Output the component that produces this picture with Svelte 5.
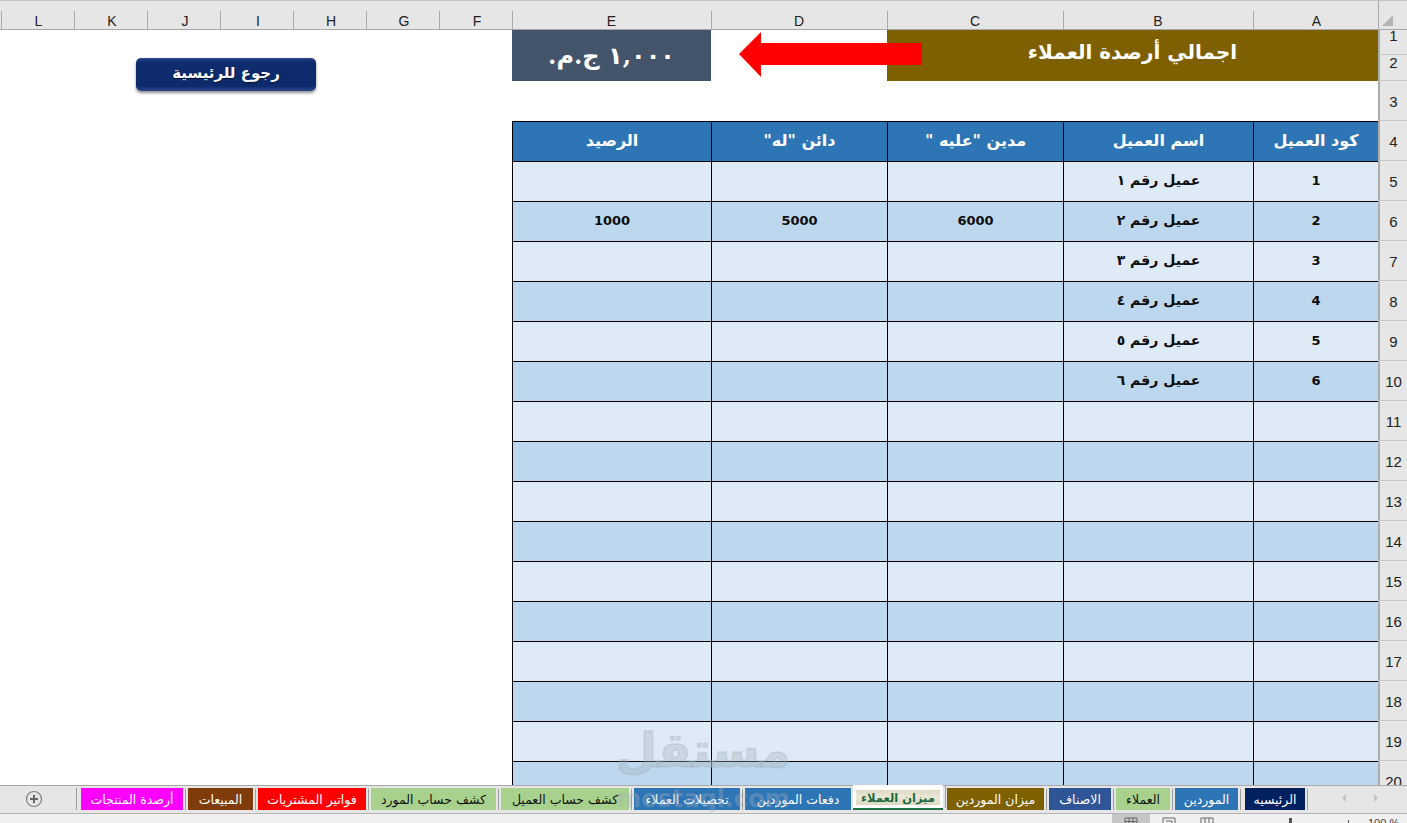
<script>
  const leftCols = ['L','K','J','I','H','G','F'];
  const names = ['عميل رقم ١','عميل رقم ٢','عميل رقم ٣','عميل رقم ٤','عميل رقم ٥','عميل رقم ٦'];
  const heads = ['الرصيد','دائن "له"','مدين "عليه "','اسم العميل','كود العميل'];
  const rows = Array.from({ length: 16 }, (_, i) => {
    const n = names[i];
    const bal = i === 1 ? ['1000','5000','6000'] : ['','',''];
    return { num: i + 5, cells: [...bal, n || '', n ? String(i + 1) : ''] };
  });
  const tabs = [
    { t: 'أرصدة المنتجات', w: 102, c: 'magenta' },
    { t: 'المبيعات', w: 65, c: 'brown' },
    { t: 'فواتير المشتريات', w: 108, c: 'red' },
    { t: 'كشف حساب المورد', w: 125, c: 'green' },
    { t: 'كشف حساب العميل', w: 128, c: 'green' },
    { t: 'تحصيلات العملاء', w: 106, c: 'blue' },
    { t: 'دفعات الموردين', w: 106, c: 'blue' },
    { t: 'ميزان العملاء', w: 90, c: 'active' },
    { t: 'ميزان الموردين', w: 97, c: 'gold' },
    { t: 'الاصناف', w: 62, c: 'indigo' },
    { t: 'العملاء', w: 54, c: 'green' },
    { t: 'الموردين', w: 63, c: 'blue' },
    { t: 'الرئيسيه', w: 60, c: 'navy' }
  ];
</script>

<div class="app">
  <header class="colbar">
    {#each leftCols as c}<div class="col narrow">{c}</div>{/each}
    <div class="col e">E</div>
    <div class="col d">D</div>
    <div class="col cc">C</div>
    <div class="col b">B</div>
    <div class="col a">A</div>
    <div class="corner"><span class="tri"></span></div>
  </header>

  <main class="sheet">
    <div class="free">
      <button class="back">رجوع للرئيسية</button>
    </div>

    <div class="sum">١,٠٠٠ ج.م.</div>
    <div class="title">اجمالي أرصدة العملاء</div>
    <div class="rh r1">1</div>
    <div class="rh r2">2</div>
    <div class="blank"></div>
    <div class="rh tall">3</div>

    {#each heads as h}<div class="cell head">{h}</div>{/each}
    <div class="rh tall">4</div>

    {#each rows as r, i}
      {#each r.cells as v, j}
        <div class="cell" class:alt={i % 2 === 1} class:name={j === 3}>{v}</div>
      {/each}
      <div class="rh tall">{r.num}</div>
    {/each}

    <svg class="arrow" viewBox="0 0 184 45" width="184" height="45" aria-hidden="true">
      <polygon points="0,22 22,0 22,11 183,11 183,33 22,33 22,45" fill="#ff0000" />
    </svg>
  </main>

  <footer class="tabbar">
    <div class="addzone">
      <svg width="18" height="18" viewBox="0 0 18 18" aria-hidden="true">
        <circle cx="9" cy="9" r="7.5" fill="none" stroke="#7f7f7f" stroke-width="1.2" />
        <path d="M9 5v8M5 9h8" stroke="#666" stroke-width="2" />
      </svg>
    </div>
    <div class="tabs">
      {#each tabs as tab}
        <div class="tab {tab.c}" style:width="{tab.w}px"><span>{tab.t}</span></div>
      {/each}
    </div>
    <div class="scrollarrows">
      <span class="al"></span>
      <span class="ar"></span>
    </div>
  </footer>

  <div class="status">
    <div class="view on">
      <svg width="14" height="6" viewBox="0 0 14 6"><path d="M1 6V1h12v5M5 1v5M9 1v5M1 4.5h12" fill="none" stroke="#666"/></svg>
    </div>
    <div class="view">
      <svg width="14" height="6" viewBox="0 0 14 6"><path d="M1 6V1h12v5M4 4h6v2" fill="none" stroke="#666"/></svg>
    </div>
    <div class="view">
      <svg width="14" height="6" viewBox="0 0 14 6"><path d="M1 6V1h12v5M5 1v5M9 1v5" fill="none" stroke="#666"/></svg>
    </div>
    <div class="slider"><i class="thumb"></i><i class="plus"></i></div>
    <div class="zoomtxt">100 %</div>
  </div>

  <div class="mark" aria-hidden="true">
    <div class="mark-ar">مستقل</div>
    <div class="mark-en">mostaql.com</div>
  </div>
</div>

<style>
  :global(body) { margin: 0; background: #fff; }
  .app {
    position: relative;
    width: 1407px;
    height: 823px;
    overflow: hidden;
    display: flex;
    flex-direction: column;
    font-family: "Liberation Sans", Arial, sans-serif;
  }
  .colbar {
    display: flex;
    height: 30px;
    box-sizing: border-box;
    background: #e6e6e6;
    border-top: 1px solid #c4c4c4;
    border-bottom: 1px solid #a8a8a8;
    flex: none;
  }
  .col {
    box-sizing: border-box;
    font-size: 14px;
    line-height: 15px;
    padding-top: 13px;
    height: 28px;
    text-align: center;
    color: #222;
    position: relative;
  }
  .col::before {
    content: "";
    position: absolute;
    left: 0;
    top: 10px;
    bottom: 0;
    width: 1px;
    background: #ababab;
  }
  .narrow { width: 73px; padding-left: 3px; }
  .narrow:first-child { width: 74px; }
  .narrow:first-child::before { left: 1px; }
  .e { width: 199px; }
  .d { width: 176px; }
  .cc { width: 176px; }
  .b { width: 190px; }
  .a { width: 125px; padding-left: 2px; }
  .corner { width: 29px; position: relative; border-left: 1px solid #ababab; box-sizing: border-box; }
  .tri {
    position: absolute;
    left: 3px;
    top: 14px;
    width: 0;
    height: 0;
    border-style: solid;
    border-width: 0 0 11px 11px;
    border-color: transparent transparent #b4b4b4 transparent;
  }

  .sheet {
    position: relative;
    flex: none;
    height: 755px;
    overflow: hidden;
    display: grid;
    grid-template-columns: 512px 199px 176px 176px 190px 125px 29px;
    grid-template-rows: 25px 26px 40px repeat(17, 40px);
    direction: ltr;
    font-family: "DejaVu Sans", sans-serif;
  }
  .free {
    grid-column: 1;
    grid-row: 1 / -1;
    padding: 28px 0 0 136px;
    background: #fff;
  }
  .back {
    display: block;
    width: 180px;
    height: 33px;
    padding: 0 0 3px;
    border: 0;
    border-radius: 5px;
    background: linear-gradient(#2c4a8c 0, #0e2c6e 10%, #0c2a6c 85%, #2a4688 100%);
    box-shadow: 0 2px 3px rgba(0, 0, 0, .45);
    color: #fff;
    font: bold 15px "DejaVu Sans", sans-serif;
    text-shadow: 0 1px 1px rgba(0, 0, 0, .6);
  }
  .sum {
    grid-column: 2;
    grid-row: 1 / 3;
    background: #44546a;
    color: #fff;
    font: bold 24px "DejaVu Serif", "DejaVu Sans", serif;
    display: flex;
    align-items: center;
    justify-content: center;
    direction: rtl;
    letter-spacing: 1px;
  }
  .title {
    grid-column: 4 / 7;
    grid-row: 1 / 3;
    background: #7f6000;
    color: #fff;
    font-weight: bold;
    font-size: 20px;
    display: flex;
    align-items: center;
    justify-content: center;
    direction: rtl;
    padding-bottom: 7px;
  }
  .blank { grid-column: 2 / 7; grid-row: 3; background: #fff; }
  .rh {
    grid-column: 7;
    box-sizing: border-box;
    background: #e6e6e6;
    border-left: 2px solid #ababab;
    border-bottom: 1px solid #c8c8c8;
    font: 15px "Liberation Sans", Arial, sans-serif;
    color: #222;
    display: flex;
    align-items: center;
    justify-content: center;
  }
  .r1 { grid-row: 1; align-items: flex-start; line-height: 11px; }
  .r2 { grid-row: 2; align-items: flex-start; line-height: 15px; }
  .rh.tall { padding-top: 1px; }
  .cell {
    box-sizing: border-box;
    background: #deeaf6;
    border-left: 1px solid #000;
    border-top: 1px solid #000;
    font-weight: bold;
    font-size: 13px;
    color: #0d0d0d;
    display: flex;
    align-items: center;
    justify-content: center;
    padding-bottom: 3px;
    direction: rtl;
  }
  .cell.name { font-size: 14px; }
  .cell.alt { background: #bdd7ee; }
  .cell.head { background: #2e75b6; color: #fff; font-size: 16px; padding-bottom: 3px; }
  .arrow {
    position: absolute;
    left: 739px;
    top: 2px;
  }

  .tabbar {
    position: relative;
    flex: none;
    height: 29px;
    box-sizing: border-box;
    background: #e6e6e6;
    border-top: 1px solid #a8a8a8;
    border-bottom: 1px solid #b5b5b5;
    display: flex;
    align-items: flex-start;
    z-index: 2;
  }
  .addzone {
    width: 77px;
    height: 22px;
    margin-top: 2px;
    display: flex;
    align-items: center;
    padding-left: 25px;
    box-sizing: border-box;
    border-right: 1px solid #9c9c9c;
  }
  .tabs {
    flex: 1;
    display: flex;
    justify-content: flex-end;
    gap: 5px;
    padding-top: 2px;
  }
  .tab {
    position: relative;
    flex: none;
    height: 22px;
    box-sizing: border-box;
    display: flex;
    align-items: center;
    justify-content: center;
    font: 12.5px "DejaVu Sans", sans-serif;
    white-space: nowrap;
    color: #fff;
    direction: rtl;
  }
  .tab::after {
    content: "";
    position: absolute;
    right: -3px;
    top: 1px;
    bottom: 0;
    width: 1px;
    background: #9c9c9c;
  }
  .tab:last-child { margin-left: 2px; }
  .magenta { background: #ff00ff; }
  .brown { background: #7f3b09; }
  .red { background: #ff0000; }
  .green { background: #a9d18e; color: #111; }
  .blue { background: #2e75b6; }
  .gold { background: #7f6000; }
  .indigo { background: #2f5597; }
  .navy { background: #002060; }
  .tab.active {
    margin-top: -3px;
    height: 25px;
    margin-left: -3px;
    margin-right: -1px;
    background: #fff;
    padding: 5px 3px 3px;
    color: #1c6b3c;
    font-weight: bold;
    font-size: 11.5px;
    border-bottom: 2px solid #217346;
  }
  .tab.active span {
    display: flex;
    align-items: center;
    justify-content: center;
    width: 100%;
    height: 100%;
    background: linear-gradient(#dcd8c0, #ece8d8 45%, #dcd8c0);
  }
  .scrollarrows {
    width: 102px;
    flex: none;
    position: relative;
    height: 24px;
  }
  .al, .ar {
    position: absolute;
    top: 8px;
    width: 0;
    height: 0;
    border-style: solid;
    border-width: 4px;
  }
  .al { left: 37px; border-color: transparent #c4c4c4 transparent transparent; border-left-width: 0; }
  .ar { left: 69px; border-color: transparent transparent transparent #c4c4c4; border-right-width: 0; }

  .status {
    flex: none;
    height: 9px;
    overflow: hidden;
    background: #f0f0f0;
    display: flex;
    padding-left: 1112px;
    z-index: 2;
    font: 11px "Liberation Sans", Arial, sans-serif;
    color: #444;
  }
  .view {
    width: 38px;
    flex: none;
    height: 9px;
    display: flex;
    justify-content: center;
    align-items: flex-start;
    box-sizing: border-box;
    padding-top: 3px;
  }
  .view.on { background: #c6c6c6; }
  .slider { position: relative; width: 142px; flex: none; }
  .thumb { position: absolute; left: 63px; top: 4px; width: 3px; height: 5px; background: #555; }
  .plus { position: absolute; left: 122px; top: 6px; width: 1px; height: 3px; background: #555; }
  .zoomtxt { line-height: 13px; padding-top: 3px; white-space: nowrap; }

  .mark {
    position: absolute;
    left: 598px;
    top: 719px;
    width: 210px;
    text-align: center;
    color: rgba(165, 175, 188, .34);
    pointer-events: none;
    z-index: 3;
    font-family: "DejaVu Sans", sans-serif;
    font-weight: bold;
  }
  .mark-ar { font-size: 48px; line-height: 62px; direction: rtl; -webkit-text-stroke: 1.5px rgba(165, 175, 188, .34); }
  .mark-en { font-size: 24px; line-height: 26px; margin-top: 5px; }
</style>
